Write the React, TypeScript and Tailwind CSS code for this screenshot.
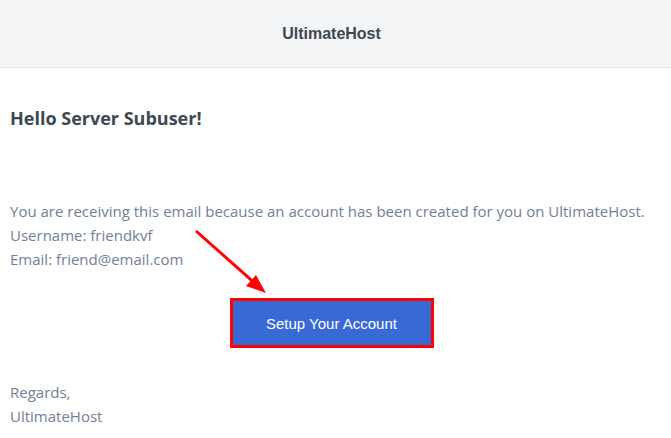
export default function App() {
  return (
    <div className="relative h-[438px] w-[671px] overflow-hidden bg-white">
      <div className="flex h-[68px] items-center justify-center border-b border-[#e8e9eb] bg-[#f3f4f6] pr-[8px]">
        <span className="font-['Liberation_Sans',Arial,sans-serif] text-[16px] font-bold text-[#3d4852]">
          UltimateHost
        </span>
      </div>
      <div className="flex flex-col px-[10px] pt-[38px] font-['Open_Sans','Noto_Sans',sans-serif]">
        <h1 className="text-[18px] font-bold leading-[24px] text-[#3d4852]">
          Hello Server Subuser!
        </h1>
        <div className="mt-[69px] text-[15px] leading-[24px] text-[#718096]">
          <p>You are receiving this email because an account has been created for you on UltimateHost.</p>
          <p>Username: friendkvf</p>
          <p>Email: friend@email.com</p>
        </div>
        <div className="mt-[27px] flex justify-center pr-[8px]">
          <a className="flex h-[50px] w-[204px] items-center justify-center border-[3px] border-[#ff0000] bg-[#3869d4] pt-[3px] font-['Liberation_Sans',Arial,sans-serif] text-[15px] text-white">
            Setup Your Account
          </a>
        </div>
        <div className="mt-[32px] text-[15px] leading-[24px] text-[#718096]">
          <p>Regards,</p>
          <p>UltimateHost</p>
        </div>
      </div>
      <svg className="pointer-events-none absolute left-0 top-0" width="671" height="438" viewBox="0 0 671 438">
        <line x1="196" y1="231" x2="258" y2="286" stroke="#ff0000" strokeWidth="3" />
        <polygon points="266,293 246,286 256,275" fill="#ff0000" />
      </svg>
    </div>
  );
}
